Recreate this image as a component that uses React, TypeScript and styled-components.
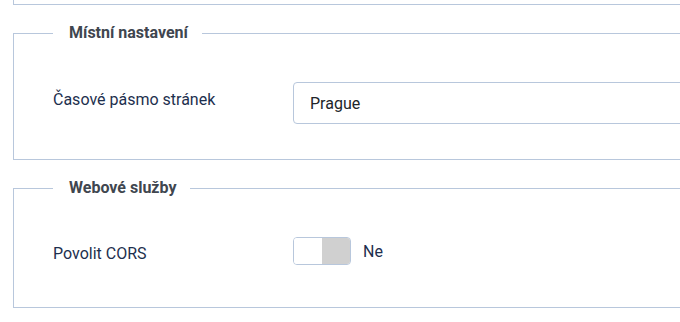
import React from "react";
import styled, { createGlobalStyle } from "styled-components";

const GlobalStyle = createGlobalStyle`
  html, body {
    margin: 0;
    padding: 0;
    background: #fff;
    overflow: hidden;
  }
  body {
    font-family: Roboto, "Noto Sans", sans-serif;
  }
`;

const Page = styled.div`
  width: 1000px;
  padding-left: 13px;
`;

const PrevSection = styled.div`
  height: 4px;
  border: 1px solid #b8c7dc;
  border-top: none;
`;

const Fieldset = styled.fieldset<{ $top: number; $bottom: number }>`
  margin: 16px 0 0 0;
  padding: ${({ $top }) => $top}px 0 ${({ $bottom }) => $bottom}px 39px;
  border: 1px solid #b8c7dc;
  min-width: 0;
`;

const Legend = styled.legend`
  padding: 0 14px 0 16px;
  font-size: 16px;
  font-weight: 700;
  line-height: 24px;
  color: #40464f;
`;

const Row = styled.div`
  display: grid;
  grid-template-columns: 240px 1fr;
  align-items: center;
`;

const Label = styled.label<{ $shift: number }>`
  font-size: 16px;
  color: #1d2f4e;
  position: relative;
  top: ${({ $shift }) => $shift}px;
`;

const Input = styled.div`
  height: 40px;
  border: 1px solid #b8c7dc;
  border-radius: 4px;
  display: flex;
  align-items: center;
  padding-left: 16px;
  font-size: 16px;
  color: #212529;
`;

const SwitchWrap = styled.div`
  display: flex;
  align-items: center;
  gap: 12px;
`;

const Switch = styled.div`
  width: 56px;
  height: 26px;
  border: 1px solid #b8c7dc;
  border-radius: 4px;
  display: flex;
  overflow: hidden;
`;

const Half = styled.span<{ $on: boolean }>`
  flex: 1;
  background: ${({ $on }) => ($on ? "#d0d0d0" : "#fff")};
`;

const SwitchText = styled.span`
  font-size: 16px;
  color: #1d2f4e;
`;

export default function App() {
  return (
    <Page>
      <GlobalStyle />
      <PrevSection />
      <Fieldset $top={37} $bottom={35}>
        <Legend>Místní nastavení</Legend>
        <Row>
          <Label $shift={-4}>Časové pásmo stránek</Label>
          <Input>Prague</Input>
        </Row>
      </Fieldset>
      <Fieldset $top={37} $bottom={42}>
        <Legend>Webové služby</Legend>
        <Row>
          <Label $shift={2}>Povolit CORS</Label>
          <SwitchWrap>
            <Switch>
              <Half $on={false} />
              <Half $on={true} />
            </Switch>
            <SwitchText>Ne</SwitchText>
          </SwitchWrap>
        </Row>
      </Fieldset>
    </Page>
  );
}
